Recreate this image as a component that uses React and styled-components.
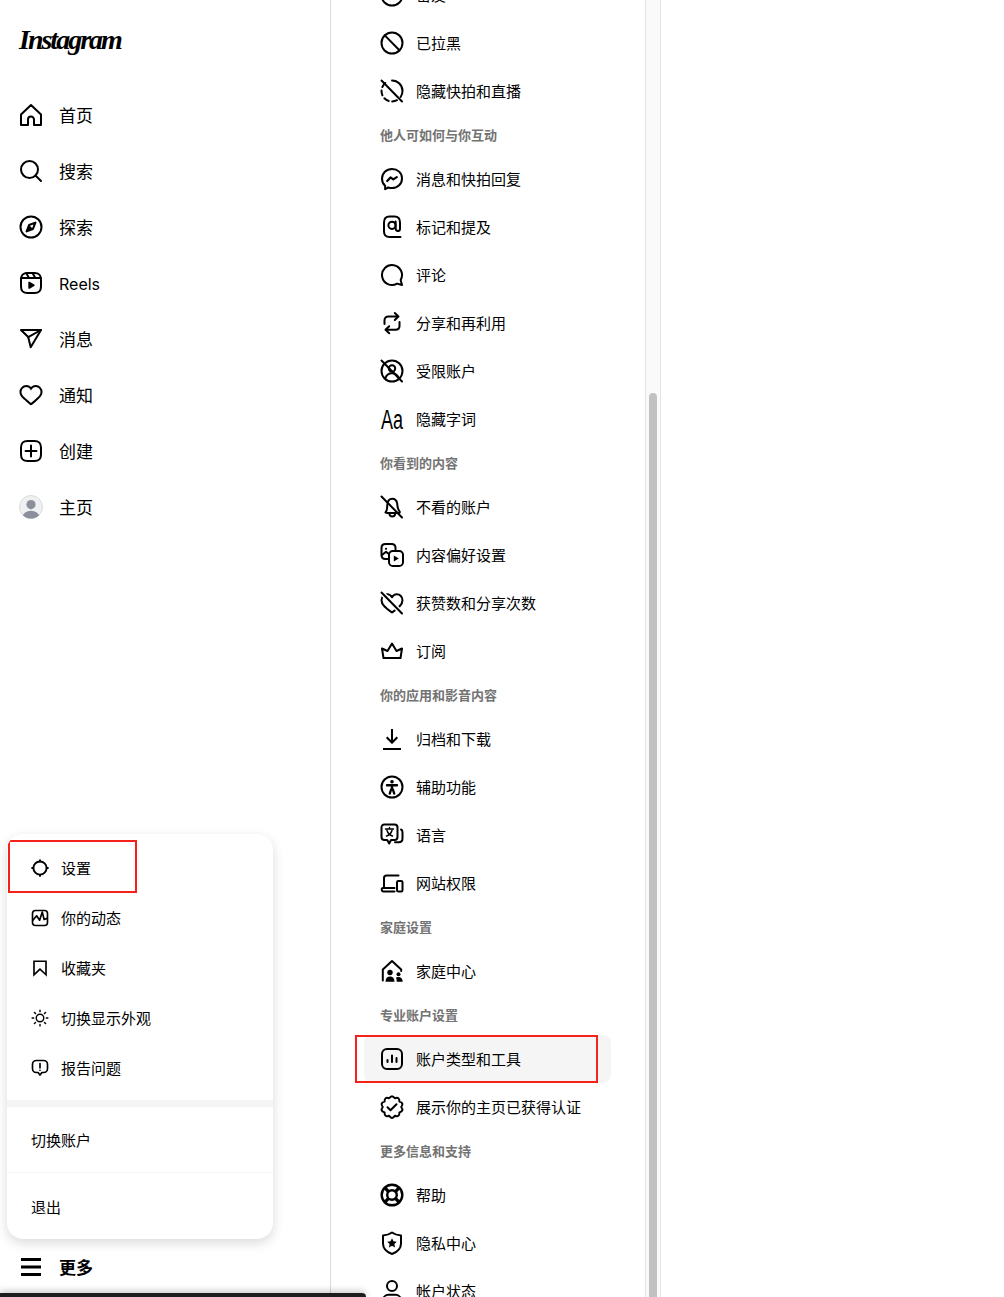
import React from "react";
import styled, { createGlobalStyle } from "styled-components";

const Global = createGlobalStyle`
  html, body { margin: 0; padding: 0; height: 100%; background: #fff; }
  #root { height: 100%; }
  * { box-sizing: border-box; }
  body { font-family: Inter, "Noto Sans CJK SC", sans-serif; color: #000; }
`;

const Page = styled.div`
  position: relative;
  display: flex;
  height: 1297px;
  overflow: hidden;
  background: #fff;
`;
const Sidebar = styled.aside`
  position: relative;
  flex: 0 0 331px;
  display: flex;
  flex-direction: column;
  padding: 0 0 2px 19px;
  border-right: 1px solid #dbdbdb;
`;
const LogoBar = styled.div`
  height: 87px;
  padding-top: 18px;
  flex: none;
`;
const Logo = styled.div`
  font-family: "Liberation Serif", serif;
  font-style: italic;
  font-weight: 700;
  font-size: 28px;
  line-height: 44px;
  letter-spacing: -2px;
  color: #000;
`;
const Nav = styled.nav`
  display: flex;
  flex-direction: column;
`;
const NavRow = styled.div`
  display: flex;
  align-items: center;
  gap: 16px;
  height: 56px;
  font-size: ${(p) => (p.$latin ? 16 : 17)}px;
  font-weight: ${(p) => (p.$bold ? 700 : 400)};
`;
const MoreRow = styled(NavRow)`
  margin-top: auto;
`;
const Label = styled.span`
  padding-bottom: ${(p) => (p.$flat ? 0 : 2)}px;
`;
const LatinLabel = styled.span`
  padding-top: 2px;
`;
const Glyph = styled.svg.attrs((p) => ({
  viewBox: "0 0 24 24",
  fill: "none",
  stroke: p.stroke || "currentColor",
  strokeWidth: p.strokeWidth || 2,
  strokeLinecap: p.strokeLinecap || "round",
  strokeLinejoin: p.strokeLinejoin || "round",
}))`
  flex: none;
  display: block;
  width: ${(p) => p.$size || 24}px;
  height: ${(p) => p.$size || 24}px;
  color: #000;
`;
const Menu = styled.div`
  position: absolute;
  left: 7px;
  bottom: 58px;
  width: 266px;
  height: 405px;
  background: #fff;
  border-radius: 16px;
  box-shadow: 0 4px 12px rgba(0, 0, 0, 0.15);
  overflow: hidden;
  display: flex;
  flex-direction: column;
`;
const MenuGroup = styled.div`
  padding: 9px 8px 7px;
  flex: none;
`;
const MenuRow = styled.div`
  display: flex;
  align-items: center;
  gap: 12px;
  height: 50px;
  padding-left: 16px;
  font-size: 15px;
`;
const Divider = styled.div`
  height: ${(p) => p.$h}px;
  background: #f5f5f5;
  flex: none;
`;
const AccountRow = styled.div`
  display: flex;
  align-items: center;
  height: ${(p) => p.$h}px;
  padding-left: 24px;
  font-size: 15px;
  flex: none;
`;
const Annotation = styled.div`
  position: absolute;
  left: ${(p) => p.$l}px;
  top: ${(p) => p.$t}px;
  width: ${(p) => p.$w}px;
  height: ${(p) => p.$h}px;
  border: 2px solid #f5221b;
  pointer-events: none;
`;
const Settings = styled.main`
  flex: 0 0 315px;
  border-right: 1px solid #e3e3e3;
  overflow: hidden;
`;
const SettingsList = styled.div`
  margin-top: -29px;
  padding: 0 34px 0 33px;
  display: flex;
  flex-direction: column;
`;
const SectionLabel = styled.div`
  display: flex;
  align-items: center;
  height: 40px;
  padding: 0 0 2px 16px;
  font-size: 13px;
  font-weight: 700;
  color: #737373;
`;
const SettingRow = styled.div`
  position: relative;
  display: flex;
  align-items: center;
  gap: 12px;
  height: 48px;
  padding-left: 16px;
  font-size: 15px;
  border-radius: 8px;
  background: ${(p) => (p.$active ? "#f5f5f5" : "transparent")};
`;
const ScrollTrack = styled.div`
  flex: 0 0 15px;
  padding: 393px 0 0 3px;
  background: #fafafa;
  border-right: 1px solid #e3e3e3;
`;
const ScrollThumb = styled.div`
  width: 8px;
  height: 1000px;
  border-radius: 4px;
  background: #c1c1c1;
`;
const WindowEdge = styled.div`
  position: absolute;
  left: 0;
  bottom: 0;
  width: 366px;
  height: 4px;
  background: #1d1d1f;
  border-top-right-radius: 5px;
  box-shadow: 0 -1px 7px rgba(0, 0, 0, 0.35);
`;

const I = ({ size, children, ...rest }) => <Glyph $size={size} {...rest}>{children}</Glyph>;

/* Main navigation */
const Home = () => <I><path d="M9.005 16.545a2.997 2.997 0 0 1 2.997-2.997A2.997 2.997 0 0 1 15 16.545V22h7V11.543L12 2 2 11.543V22h7.005Z" /></I>;
const Search = () => <I><path d="M19 10.5A8.5 8.5 0 1 1 10.5 2a8.5 8.5 0 0 1 8.5 8.5Z" /><path d="M16.511 16.511 22 22" /></I>;
const Explore = () => <I><polygon points="13.941 13.953 7.581 16.424 10.06 10.056 16.42 7.585" /><polygon points="10.06 10.056 13.949 13.945 7.581 16.424" fill="currentColor" stroke="none" /><circle cx="12" cy="12" r="10.5" /></I>;
const Reels = () => <I><path d="M2.049 7.002H21.95M13.504 2.001l2.858 5.001M7.207 2.11l2.795 4.892" /><path d="M2 12v3.449c0 2.849.698 4.006 1.606 4.945.94.908 2.098 1.607 4.946 1.607h6.896c2.848 0 4.006-.699 4.946-1.607.908-.939 1.606-2.096 1.606-4.945V8.552c0-2.848-.698-4.006-1.606-4.945C19.454 2.699 18.296 2 15.448 2H8.552c-2.848 0-4.006.699-4.946 1.607C2.698 4.546 2 5.704 2 8.552Z" /><path fill="currentColor" stroke="none" d="M9.763 17.664a.908.908 0 0 1-.454-.787V11.63a.909.909 0 0 1 1.364-.788l4.545 2.624a.909.909 0 0 1 0 1.575l-4.545 2.624a.91.91 0 0 1-.91 0Z" /></I>;
const Send = () => <I><path d="M22 3 9.218 10.083" /><polygon points="11.698 20.334 22 3.001 2 3.001 9.218 10.084" /></I>;
const HeartPath = "M16.792 3.904A4.989 4.989 0 0 1 21.5 9.122c0 3.072-2.652 4.959-5.197 7.222-2.512 2.243-3.865 3.469-4.303 3.752-.477-.309-2.143-1.823-4.303-3.752C5.141 14.072 2.5 12.167 2.5 9.122a4.989 4.989 0 0 1 4.708-5.218 4.21 4.21 0 0 1 3.675 1.941c.84 1.175.98 1.763 1.12 1.763s.278-.588 1.11-1.766a4.17 4.17 0 0 1 3.679-1.938m0-2a6.04 6.04 0 0 0-4.797 2.127 6.052 6.052 0 0 0-4.787-2.127A6.985 6.985 0 0 0 .5 9.122c0 3.61 2.55 5.827 5.015 7.97.283.246.569.494.853.747l1.027.918a44.998 44.998 0 0 0 3.518 3.018 2 2 0 0 0 2.174 0 45.263 45.263 0 0 0 3.626-3.115l.922-.824c.293-.26.59-.519.885-.774 2.334-2.025 4.98-4.32 4.98-7.94a6.985 6.985 0 0 0-6.708-7.218Z";
const Heart = () => <I><path d={HeartPath} fill="currentColor" stroke="none" /></I>;
const Create = () => <I><path d="M2 12v3.45c0 2.849.698 4.005 1.606 4.944.94.909 2.098 1.608 4.946 1.608h6.896c2.848 0 4.006-.7 4.946-1.608C21.302 19.455 22 18.3 22 15.45V8.552c0-2.849-.698-4.006-1.606-4.945C19.454 2.7 18.296 2 15.448 2H8.552c-2.848 0-4.006.699-4.946 1.607C2.698 4.547 2 5.703 2 8.552Z" /><path d="M6.545 12h10.91M12 6.545v10.91" /></I>;
const Avatar = () => (
  <I>
    <defs><clipPath id="av"><circle cx="12" cy="12" r="11.5" /></clipPath></defs>
    <circle cx="12" cy="12" r="11.5" fill="#eff0f2" stroke="#dbdbdb" strokeWidth="1" />
    <g clipPath="url(#av)" fill="#8c8f9b" stroke="none">
      <circle cx="12" cy="9.6" r="4.6" />
      <ellipse cx="12" cy="22" rx="8.2" ry="6.2" />
    </g>
  </I>
);
const Burger = () => <I strokeWidth="2.8" strokeLinecap="butt"><path d="M2 4.5h20M2 12h20M2 19.5h20" /></I>;

/* Menu */
const Gear = () => <I size={18} strokeWidth="2.6"><circle cx="12" cy="12" r="8.8" /><path d="M12 1.5v1.5M12 21v1.5M1.5 12H3M21 12h1.5" /></I>;
const Activity = () => <I size={18} strokeWidth="2.2"><rect x="2" y="2" width="20" height="20" rx="4" /><path d="M2.5 15 7.500 9l4 6 3.500-11 2.500 10 4-1.500" /></I>;
const Bookmark = () => <I size={18} strokeWidth="2.2" strokeLinejoin="miter" strokeLinecap="butt"><polygon points="20 21 12 13.44 4 21 4 3 20 3" /></I>;
const Sun = () => <I size={18} strokeWidth="1.9"><circle cx="12" cy="12" r="5" /><path d="M12 1.500v2M12 20.500v2M1.500 12h2M20.500 12h2M4.600 4.600 6 6M18 18l1.400 1.400M4.600 19.400 6 18M18 6l1.400-1.400" /></I>;
const Report = () => <I size={18} strokeWidth="2.2"><path d="M7 2h10c2.800 0 5 2.200 5 5v6c0 2.800-2.200 5-5 5h-2.500L12 21.500 9.500 18H7c-2.800 0-5-2.200-5-5V7c0-2.800 2.200-5 5-5Z" /><path d="M12 6v6M12 15v.1" /></I>;

/* Settings */
const StarCircle = () => <I><circle cx="12" cy="12" r="10.5" /></I>;
const Blocked = () => <I><circle cx="12" cy="12" r="10.5" /><path d="M4.800 4.400 19.400 19.300" /></I>;
const HideStory = () => <I><path d="M12 1.500A10.500 10.500 0 0 1 22.500 12c0 2.200-.7 4.300-1.900 6" /><path d="M17 21.200A10.500 10.500 0 0 1 1.500 12 10.500 10.500 0 0 1 5.500 3.800" strokeDasharray="5 3.500" /><path d="M1.500 1.500 22 22.500" /></I>;
const Messenger = () => <I><path d="M12 2c-5.700 0-10 4.200-10 9.700 0 2.900 1.200 5.400 3.100 7.100v3.400l3.100-1.700c1.200.4 2.500.6 3.800.6 5.700 0 10-4.200 10-9.700S17.700 2 12 2Z" /><path d="m7.200 14 3.300-3.600 2.800 2 3.500-2.300" strokeWidth="2.200" /></I>;
const Tag = () => <I><path d="M20.500 22H9.500C5.500 22 4 20 4 16.500v-9C4 3.500 6 1.500 9.500 1.500h5c3.500 0 5.500 2 5.500 6v6c0 1.700-.8 2.500-2 2.500" /><circle cx="12" cy="10.300" r="3.600" /><path d="M15.600 6.500v6.500c0 2 1 3 2.400 3" /></I>;
const Comment = () => <I><path d="M20.656 17.008a9.993 9.993 0 1 0-3.590 3.615L22 22Z" /></I>;
const Share = () => <I><path d="M4.500 13V9.300C4.500 6.900 6 5.500 8.500 5.500H18.500M14.800 2l3.700 3.500L14.800 9" /><path d="M19.500 11v4c0 2.300-1.500 3.800-4 3.800H5.500M9.200 15.200 5.500 18.800l3.700 3.400" /></I>;
const Restricted = () => <I><circle cx="12" cy="12" r="10.500" /><circle cx="12" cy="9.500" r="3.200" /><path d="M5.500 19c1-3.200 3.400-4.800 6.500-4.800s5.500 1.600 6.500 4.800" /><path d="M1.500 1.500 22 22.500" /></I>;
const AaText = styled.text`
  font-family: "Liberation Sans", sans-serif;
  font-size: 27px;
  fill: #000;
`;
const Aa = () => <I stroke="none"><AaText x="1" y="22" textLength="22" lengthAdjust="spacingAndGlyphs">Aa</AaText></I>;
const Muted = () => <I><path d="M5.500 17.500c2-2 1.500-5 1.800-8C7.600 6 9.500 3.800 12.200 3.800c2.600 0 4.500 1.800 5 4.700.3 2.500.1 5 2.300 7.800.8 1-.1 1.700-1 1.700H7" /><path d="M9.300 18.500c.2 1.800 1.400 3 3 3s2.800-1 3-3" /><path d="M1.500 1.500 22 22.500" /></I>;
const ContentPrefs = () => <I><path d="M9 16H5.500C3 16 1.500 14.500 1.500 12V5C1.500 2.600 3 1 5.500 1h6C14 1 15.500 2.600 15.500 5v1.500" /><circle cx="6" cy="5.800" r="1.100" fill="currentColor" stroke="none" /><path d="M2 12 6 8.800 8.800 11" /><rect x="9" y="8" width="14" height="15" rx="3.800" /><path d="M13.800 12.500v6l5-3Z" fill="currentColor" stroke="none" /></I>;
const HeartOff = () => <I><path d="M16.800 3.300c-2 0-3.700 1-4.800 3-1.100-2-2.800-3-4.800-3C4 3.300 1.500 6 1.500 9.200c0 5.300 5.500 8.800 10.500 12.300 5-3.500 10.500-7 10.500-12.300 0-3.200-2.500-5.900-5.700-5.900Z" /><path d="M1.500 1.500 22 22.500" stroke="#fff" strokeWidth="5" /><path d="M1.500 1.500 22 22.500" /></I>;
const Crown = () => <I><path d="M2 9.500l5.500 2.500L12 4.500l4.500 7.500L22 9.500 20.500 19h-17Z" /></I>;
const Download = () => <I><path d="M12 2v13.500M6.700 10.300 12 15.800l5.300-5.500M3 22h18" strokeLinecap="butt" /></I>;
const Accessibility = () => <I><circle cx="12" cy="12" r="10.500" /><circle cx="12" cy="6.800" r="1.800" fill="currentColor" stroke="none" /><path d="M7 10.200h10M12 10.200v4.300M9.800 18.500l1.300-4h1.800l1.300 4" strokeWidth="2.400" /></I>;
const Language = () => <I><path d="M4.500 1.500h10c2 0 3 1.200 3 3v9.500c0 2-1 3-3 3H11l-1.800 3.500L7.200 17H4.500c-2 0-3-1-3-3V4.500c0-1.800 1-3 3-3Z" /><path d="M21 6.500c1 .4 1.500 1.500 1.500 2.800v6.200c0 2.700-1.500 3.800-3.800 3.800H15" /><path d="M5.500 6h8M9.500 4.500V6M7 7.500c.8 2.500 2.700 4.800 5.500 5.500M12 7.500c-.8 2.500-2.700 4.800-5.500 5.500" strokeWidth="1.500" /></I>;
const Devices = () => <I><path d="M18.500 4.500H6.500c-1.500 0-2.500 1-2.500 2.500v9.500" /><path d="M14.500 20.500H3.500c-2 0-2.500-3.500-.5-3.500h11.500" /><rect x="17" y="10" width="5.500" height="10.500" rx="1.300" /></I>;
const Family = () => <I><path d="M2.800 21.500V10.500L12 2l9.200 8.500V12" /><g fill="currentColor" stroke="none"><circle cx="10" cy="13.500" r="2.700" /><path d="M5.500 22.800c0-3.400 1.800-5.300 4.500-5.300s4.500 1.900 4.500 5.300Z" /><circle cx="18.500" cy="15.300" r="2" /><path d="M16.500 18.400c.6-.3 1.300-.4 2-.4 2.500 0 4.200 1.600 4.200 4.800h-6c0-1.800-.2-3.200-.8-4.400Z" /></g></I>;
const Insights = () => <I><rect x="2" y="2" width="20" height="20" rx="5" /><path d="M7.500 15v-2M12 15V8.500M16.500 15v-4" /></I>;
const badge = (() => {
  const n = 10;
  const at = (r, a) => `${(12 + r * Math.cos(a)).toFixed(2)} ${(12 + r * Math.sin(a)).toFixed(2)}`;
  let d = "";
  for (let i = 0; i < n; i++) {
    const a0 = ((i - 0.5) / n) * Math.PI * 2 - Math.PI / 2;
    const a1 = (i / n) * Math.PI * 2 - Math.PI / 2;
    const a2 = ((i + 0.5) / n) * Math.PI * 2 - Math.PI / 2;
    d += (i === 0 ? `M${at(9.2, a0)}` : "") + `Q${at(13, a1)} ${at(9.2, a2)}`;
  }
  return d + "Z";
})();
const Verified = () => <I><path d={badge} /><path d="m7.500 12.300 3 3 6-6" /></I>;
const Help = () => <I strokeWidth="2.400"><circle cx="12" cy="12" r="10.300" /><circle cx="12" cy="12" r="4.800" /><path d="m4.900 4.900 3.700 3.700M19.100 4.900l-3.700 3.700M4.900 19.100l3.700-3.700M19.100 19.100l-3.700-3.700" strokeWidth="3.400" strokeLinecap="butt" /></I>;
const Shield = () => <I><path d="M12 1.500c2.500 1.800 5.500 2.700 9 3v8c0 5-3.500 8.500-9 10.500-5.500-2-9-5.500-9-10.500v-8c3.500-.3 6.500-1.200 9-3Z" /><path fill="currentColor" stroke="none" d="m12 7.300 1.500 3 3.300.5-2.400 2.300.6 3.300-3-1.600-3 1.600.6-3.300-2.400-2.300 3.300-.5Z" /></I>;
const Person = () => <I><circle cx="12" cy="7" r="5" /><path d="M3 23v-1.500C3 18 5.500 15.800 8.500 15.800h7c3 0 5.500 2.200 5.500 5.700V23" /></I>;

const navItems = [
  [Home, "首页"], [Search, "搜索"], [Explore, "探索"], [Reels, "Reels", true],
  [Send, "消息"], [Heart, "通知"], [Create, "创建"], [Avatar, "主页"],
];
const menuItems = [
  [Gear, "设置"], [Activity, "你的动态"], [Bookmark, "收藏夹"], [Sun, "切换显示外观"], [Report, "报告问题"],
];
const settings = [
  { icon: StarCircle, text: "密友" },
  { icon: Blocked, text: "已拉黑" },
  { icon: HideStory, text: "隐藏快拍和直播" },
  { label: "他人可如何与你互动" },
  { icon: Messenger, text: "消息和快拍回复" },
  { icon: Tag, text: "标记和提及" },
  { icon: Comment, text: "评论" },
  { icon: Share, text: "分享和再利用" },
  { icon: Restricted, text: "受限账户" },
  { icon: Aa, text: "隐藏字词" },
  { label: "你看到的内容" },
  { icon: Muted, text: "不看的账户" },
  { icon: ContentPrefs, text: "内容偏好设置" },
  { icon: HeartOff, text: "获赞数和分享次数" },
  { icon: Crown, text: "订阅" },
  { label: "你的应用和影音内容" },
  { icon: Download, text: "归档和下载" },
  { icon: Accessibility, text: "辅助功能" },
  { icon: Language, text: "语言" },
  { icon: Devices, text: "网站权限" },
  { label: "家庭设置" },
  { icon: Family, text: "家庭中心" },
  { label: "专业账户设置" },
  { icon: Insights, text: "账户类型和工具", active: true },
  { icon: Verified, text: "展示你的主页已获得认证" },
  { label: "更多信息和支持" },
  { icon: Help, text: "帮助" },
  { icon: Shield, text: "隐私中心" },
  { icon: Person, text: "帐户状态" },
];

export default function App() {
  return (
    <Page>
      <Global />
      <Sidebar>
        <LogoBar><Logo>Instagram</Logo></LogoBar>
        <Nav>
          {navItems.map(([Icon, text, latin]) => (
            <NavRow key={text} $latin={latin}>
              <Icon />
              {latin ? <LatinLabel>{text}</LatinLabel> : <Label>{text}</Label>}
            </NavRow>
          ))}
        </Nav>
        <MoreRow $bold><Burger /><Label>更多</Label></MoreRow>
        <Menu>
          <MenuGroup>
            {menuItems.map(([Icon, text]) => (
              <MenuRow key={text}><Icon /><Label>{text}</Label></MenuRow>
            ))}
          </MenuGroup>
          <Divider $h={7} />
          <AccountRow $h={65}><Label $flat>切换账户</Label></AccountRow>
          <Divider $h={1} />
          <AccountRow $h={66}><Label $flat>退出</Label></AccountRow>
          <Annotation $l={1} $t={6} $w={129} $h={53} />
        </Menu>
      </Sidebar>
      <Settings>
        <SettingsList>
          {settings.map((s, i) =>
            s.label ? (
              <SectionLabel key={i}>{s.label}</SectionLabel>
            ) : (
              <SettingRow key={i} $active={s.active}>
                <s.icon />
                <Label>{s.text}</Label>
                {s.active && <Annotation $l={-9} $t={0} $w={243} $h={48} />}
              </SettingRow>
            )
          )}
        </SettingsList>
      </Settings>
      <ScrollTrack><ScrollThumb /></ScrollTrack>
      <WindowEdge />
    </Page>
  );
}
